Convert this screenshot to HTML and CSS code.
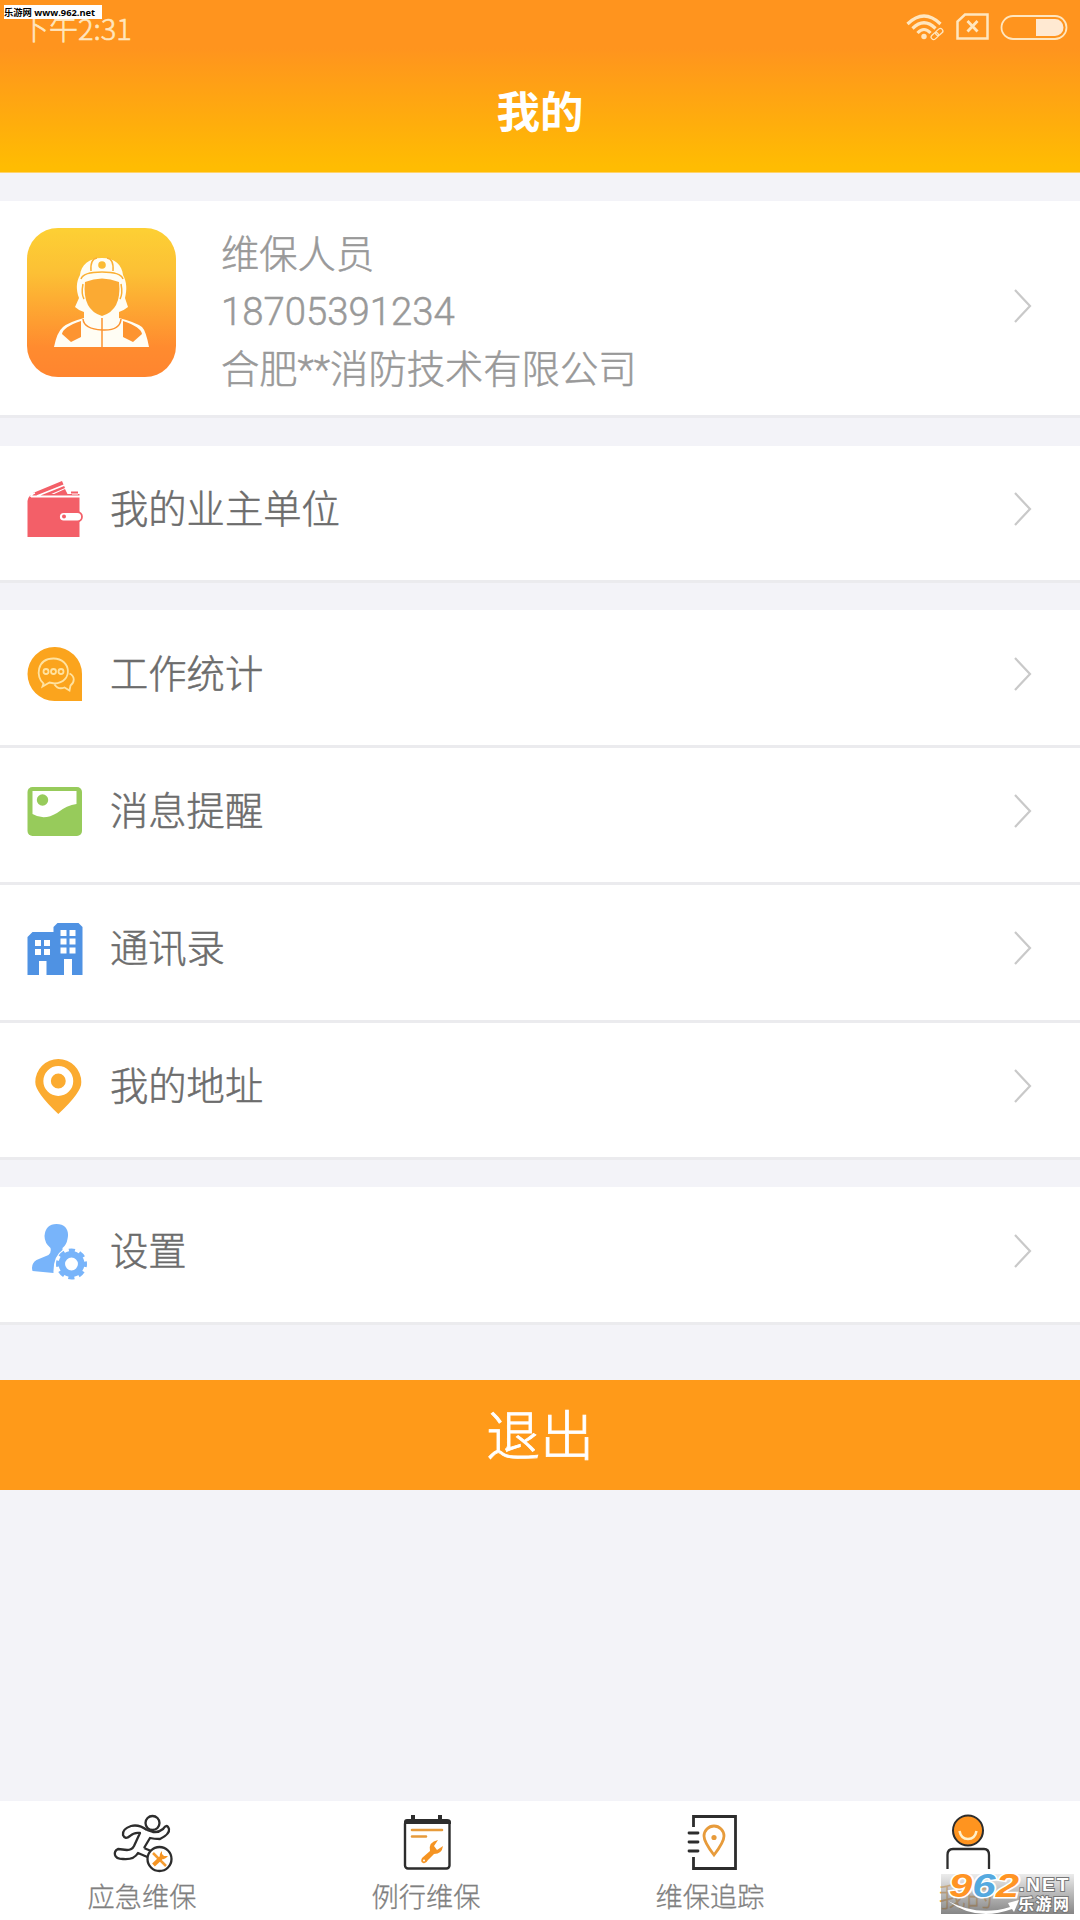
FILE: index.html
```html
<!DOCTYPE html>
<html lang="zh-CN">
<head>
<meta charset="utf-8">
<title>我的</title>
<link rel="stylesheet" href="styles.css">
</head>
<body>
<div class="screen">
  <header class="header">
    <div class="status">
      <span class="time">下午2:31</span>
      <svg class="status-icons" width="162" height="28" viewBox="0 0 162 28" fill="none" stroke="#ffe6bf">
        <path d="M1.500 11Q18-5 34.500 11M6.500 15.500Q18 4 29.500 15.500M11.500 20Q18 13 24.500 20" stroke-width="3.200"/>
        <circle cx="18" cy="23.500" r="2.700" fill="#ffe6bf" stroke="none"/>
        <g stroke-width="1.300" transform="rotate(-42 31 21)"><rect x="24" y="18.500" width="8" height="5" rx="2.500"/><rect x="30" y="18.500" width="8" height="5" rx="2.500"/></g>
        <path d="M59 1.500H81.500V25.500H51.500V8.500Z" stroke-width="2.500"/>
        <path d="M61.500 8L71.500 18.500M71.500 8L61.500 18.500" stroke-width="2.800"/>
        <rect x="95.500" y="3" width="65" height="23" rx="11.500" stroke-width="1.800"/>
        <path d="M130 6H149A8.500 8.500 0 0 1 149 23H130Z" fill="#ffe9d2" stroke="none"/>
      </svg>
    </div>
    <h1 class="title">我的</h1>
    <div class="site-tag">乐游网 www.962.net</div>
  </header>

  <main class="content">
    <section class="group profile">
      <svg class="avatar" width="149" height="149" viewBox="0 0 149 149">
        <defs><linearGradient id="av" x1="0" y1="0" x2="0" y2="1"><stop offset="0" stop-color="#fdd034"/><stop offset=".3" stop-color="#fcc035"/><stop offset=".8" stop-color="#ff8b2f"/><stop offset="1" stop-color="#ff852f"/></linearGradient></defs>
        <rect width="149" height="149" rx="31" fill="url(#av)"/>
        <path d="M53 47C54 37 62 30 75 30S95 37 96 47C100 54 100 62 98 70L101 79Q96 83 92 84V90Q108 94 115 99Q119 103 122 119H27Q30 104 36 99Q42 94 57 90V84Q51 82 48 79L52 70C49 62 49 54 53 47Z" fill="#fffdf4"/>
        <path d="M58 54Q75 47 92 54Q95 82 75 88Q55 82 58 54Z" fill="#fbaa33"/>
        <path d="M54 51Q56 44 75 44T96 51M64 43Q63 31 70 30M86 43Q87 31 80 30M56 56Q54 66 57 71M94 56Q96 66 93 71" fill="none" stroke="#fbb034" stroke-width="1.500"/>
        <circle cx="75" cy="37" r="3.800" fill="#fbbb34"/>
        <path d="M56 91Q57 101 75 102T94 91M75 90V119" fill="none" stroke="#fc9431" stroke-width="1.500"/>
        <path d="M35 106Q36 99 54 93V109L44 114ZM115 106Q114 99 96 93V109L106 114Z" fill="#fd9430"/>
      </svg>
      <div class="person"><p>维保人员</p><p class="phone">18705391234</p><p>合肥**消防技术有限公司</p></div>
      <svg class="chevron" width="18" height="34" viewBox="0 0 18 34"><path d="M1 1L16 17L1 33"/></svg>
    </section>

    <section class="group">
      <div class="row">
        <svg class="icon" width="60" height="60" viewBox="0 0 60 60">
          <path d="M3.500 58V22Q4.500 15 11.500 15H55.500V58Z" fill="#f35f68"/>
          <path d="M9 16V14L38 2L41 9L25 16ZM28 16L41 10L44 16Z" fill="#f35f68"/>
          <path d="M7 18Q7 15 11 14M13 17L43 5M48 14.500H54M7 17.500H56" stroke="#fff" stroke-width="1.800" fill="none"/>
          <path d="M47 13.500H54" stroke="#f35f68" stroke-width="2"/>
          <rect x="35" y="33" width="23" height="9.500" rx="4.700" fill="#fff" stroke="#f35f68" stroke-width="1.800"/><circle cx="40" cy="37.500" r="2" fill="#f35f68"/>
        </svg>
        <span class="label">我的业主单位</span>
        <svg class="chevron" width="18" height="34" viewBox="0 0 18 34"><path d="M1 1L16 17L1 33"/></svg>
      </div>
    </section>

    <section class="group">
      <div class="row">
        <svg class="icon" width="60" height="60" viewBox="0 0 60 60">
          <path d="M30.500 3A27 27 0 1 0 30.500 57H58V30A27 27 0 0 0 30.500 3Z" fill="#fba41d"/>
          <g fill="none" stroke="#ffe2a0" stroke-width="1.800" transform="translate(1.500 .5)"><path d="M18 39C10 33 11 14 28 14C46 14 48 38 29 39L24 38L17 42Z"/><path d="M44 29C50 32 49 38 45 41L44 46L39 43C34 45 31 43 29 40"/><circle cx="20.500" cy="27" r="2.500"/><circle cx="28" cy="27" r="2.500"/><circle cx="35.500" cy="27" r="2.500"/></g>
        </svg>
        <span class="label">工作统计</span>
        <svg class="chevron" width="18" height="34" viewBox="0 0 18 34"><path d="M1 1L16 17L1 33"/></svg>
      </div>
      <div class="row">
        <svg class="icon" width="60" height="60" viewBox="0 0 60 60">
          <rect x="3.500" y="6" width="54.500" height="49" rx="5" fill="#97cb5b"/>
          <path d="M8.500 10H52.500V23Q43 24 33 32Q20 40 8.500 33Z" fill="#fff"/><circle cx="18.500" cy="19" r="5.700" fill="#97cb5b"/>
        </svg>
        <span class="label">消息提醒</span>
        <svg class="chevron" width="18" height="34" viewBox="0 0 18 34"><path d="M1 1L16 17L1 33"/></svg>
      </div>
      <div class="row">
        <svg class="icon" width="60" height="60" viewBox="0 0 60 60">
          <path d="M3.500 57V19L8.500 14H29.500V9L33.500 5H54.500L58.500 9V57H48V41H40V57H22.500V43H15V57Z" fill="#4f92e3"/>
          <path d="M11 22h6v6h-6zM20 22h6v6h-6zM11 31h6v6h-6zM20 31h6v6h-6zM36.500 12h6v6h-6zM45.500 12h6v6h-6zM36.500 20.500h6v6h-6zM45.500 20.500h6v6h-6zM36.500 29.500h6v6h-6zM45.500 29.500h6v6h-6z" fill="#fff"/>
        </svg>
        <span class="label">通讯录</span>
        <svg class="chevron" width="18" height="34" viewBox="0 0 18 34"><path d="M1 1L16 17L1 33"/></svg>
      </div>
      <div class="row">
        <svg class="icon" width="60" height="60" viewBox="0 0 60 60">
          <path d="M34.300 58Q11 36 11.300 26A23 23 0 0 1 57.300 26Q58 36 34.300 58Z" fill="#fbab30"/>
          <circle cx="34.300" cy="25" r="11.200" fill="#fbab30" stroke="#fff" stroke-width="7.500"/>
        </svg>
        <span class="label">我的地址</span>
        <svg class="chevron" width="18" height="34" viewBox="0 0 18 34"><path d="M1 1L16 17L1 33"/></svg>
      </div>
    </section>

    <section class="group">
      <div class="row">
        <svg class="icon" width="60" height="60" viewBox="0 0 60 60" overflow="visible">
          <path d="M32.500 3C42 3 45.500 10 43.500 18Q42.500 24 38.500 27V29Q29 35 29.500 52L8.500 50Q6.500 43 12.500 39L24.500 34Q27.500 32 26.500 27Q20.500 22 20.500 15Q21.500 3 32.500 3Z" fill="#78b4fa"/>
          <circle cx="47.500" cy="43" r="9.700" fill="none" stroke="#78b4fa" stroke-width="6.500"/>
          <circle cx="47.500" cy="43" r="13.500" fill="none" stroke="#78b4fa" stroke-width="4" stroke-dasharray="6 4.603" stroke-dashoffset="3"/>
        </svg>
        <span class="label">设置</span>
        <svg class="chevron" width="18" height="34" viewBox="0 0 18 34"><path d="M1 1L16 17L1 33"/></svg>
      </div>
    </section>

    <button class="logout">退出</button>
  </main>

  <nav class="tabs">
    <div class="tab">
      <svg width="64" height="64" viewBox="0 0 64 64" fill="none" stroke="#2d2d2d" stroke-width="2.300" stroke-linejoin="round">
        <circle cx="42.500" cy="13" r="7"/>
        <path d="M37 20Q29 14 21 16Q12 19 13 25Q15 30 20 26Q24 22 30 23L24 36Q22 40 17 40L8 39Q4 41 5 45Q6 49 13 49Q24 50 28 43L42 49M34 38L40 28Q44 29 50 29Q60 24 59 19Q57 13 53 19Q48 23 43 22L37 20M34 38L41 41"/>
        <circle cx="49.500" cy="49" r="12" fill="#fff"/>
        <path d="M43 43L56 56" stroke="#f59c31" stroke-width="2.500"/><path d="M43.500 55L53 46" stroke="#f59423" stroke-width="4"/><path d="M52 41Q48 45 51 48T58 46L54 46L52 44Z" fill="#f59423" stroke="none"/>
      </svg><span>应急维保</span>
    </div>
    <div class="tab">
      <svg class="shift-s" width="64" height="64" viewBox="0 0 64 64">
        <path d="M18 5V12M45 5V12" stroke="#2d2d2d" stroke-width="4"/><rect x="10" y="11" width="44.500" height="47.500" rx="3" fill="#fff" stroke="#2d2d2d" stroke-width="2.400"/><path d="M9 14V12Q9 9 12 9H52Q56 9 56 12V14Z" fill="#2d2d2d"/>
        <path d="M17 20H47M17 26.500H31" stroke="#e79b3b" stroke-width="2.600" stroke-linecap="round"/>
        <path d="M43 30Q33 32 35 41L27 48Q25 52 28 53Q31 54 33 50L39 44Q47 44 48 36L42 40L39 36Z" fill="#f59423"/><circle cx="29" cy="50.500" r="1" fill="#fff"/>
      </svg><span>例行维保</span>
    </div>
    <div class="tab">
      <svg class="shift-l" width="64" height="64" viewBox="0 0 64 64" fill="none" stroke="#2d2d2d" stroke-width="2.800">
        <path d="M11.500 17V6.500H53.500V58.500H11.500V47"/><path d="M7 23H16M7 32H16M7 41H16" stroke-linecap="round"/>
        <path d="M32 45Q22 32 22 26A10 10 0 0 1 42 26Q42 32 32 45Z" stroke="#e79b3b"/><circle cx="32" cy="27.500" r="2.600" fill="#e79b3b" stroke="none"/>
      </svg><span>维保追踪</span>
    </div>
    <div class="tab active">
      <svg class="shift-m" width="64" height="64" viewBox="0 0 64 64" fill="none" stroke="#2d2d2d" stroke-width="2">
        <circle cx="32" cy="20.500" r="15" fill="#ff941f"/><path d="M23.500 21Q25 29 32 29T40.500 21" stroke="#fff0cb" stroke-width="2.500"/><path d="M11.500 59V45Q11.500 39 17 39H48Q53 39 53 45V59" stroke-width="2.300"/>
      </svg><span>我的</span>
    </div>
    <div class="watermark">
      <svg class="wm-swoosh" width="80" height="16" viewBox="0 0 80 16"><path d="M4 1Q34 17 66 7L64 3L75 0L70 12L68 9Q32 22 4 1Z" fill="#fff"/></svg>
      <div class="wm-num"><i>9</i><i class="blue">6</i><i>2</i></div>
      <div class="wm-net">.NET</div><div class="wm-name">乐游网</div>
    </div>
  </nav>
</div>
</body>
</html>
```

FILE: styles.css
```css
* { box-sizing: border-box; }
body { margin: 0; font-family: "Roboto", "Noto Sans CJK SC", sans-serif; }
p, h1 { margin: 0; }
.screen { width: 1080px; height: 1920px; display: flex; flex-direction: column; background: #f3f3f8; overflow: hidden; }
.header { position: relative; height: 173px; background: linear-gradient(#ff941e 0, #ff941e 28%, #ffbc02 97%); border-bottom: 1px solid #ffd36a; }
.status { height: 54px; display: flex; justify-content: space-between; padding: 0 12px 0 20px; }
.time { font: 300 29px/54px "Noto Sans CJK SC", sans-serif; color: #ffe6bf; -webkit-text-stroke: .6px #ffe6bf; }
.status-icons { margin-top: 13px; }
.title { text-align: center; font: 700 43.500px/112px "Noto Sans CJK SC", sans-serif; color: #fff; height: 112px; }
.site-tag { position: absolute; left: 4px; top: 5px; width: 98px; height: 14px; background: #fff; color: #000; font: 700 9.300px/15px "Open Sans", "Noto Sans CJK SC", sans-serif; white-space: nowrap; }

.content { flex: 1; padding-top: 28px; display: flex; flex-direction: column; gap: 27.500px; }
.group { background: #fff; }
.profile { display: flex; align-items: center; height: 217px; padding: 0 48px 0 27px; border-bottom: 3px solid #ebebef; }
.avatar { margin-top: -12px; }
.person { flex: 1; padding: 8px 0 0 45px; font-weight: 300; font-size: 38.300px; line-height: 57.500px; color: #999; -webkit-text-stroke: .5px #999; }
.profile .chevron { margin-top: -5px; }
.row { display: flex; align-items: center; height: 137.400px; padding: 0 48px 8px 24px; border-bottom: 3px solid #ebebee; }
.label { flex: 1; padding: 2px 0 0 26px; font-size: 38.300px; font-weight: 300; color: #6c6c6c; line-height: 60px; -webkit-text-stroke: .5px #6c6c6c; }
.chevron { fill: none; stroke: #c9c9c9; stroke-width: 2.200; }
.logout { margin-top: 28px; border: 0; height: 110px; background: #ff9a19; color: #fff; font: 300 54px/104px "Noto Sans CJK SC", sans-serif; padding: 0 0 5px; -webkit-text-stroke: .8px #fff; }

.tabs { position: relative; height: 119px; background: #fff; display: grid; grid-template-columns: 284px 284px 284px 228px; }
.tab { display: flex; flex-direction: column; align-items: center; padding-top: 9px; font: 300 27.200px/42px "Noto Sans CJK SC", sans-serif; color: #808080; -webkit-text-stroke: .3px currentColor; }
.tab svg { display: block; }
.shift-s { margin-left: 2px; }
.shift-m { margin-left: 4px; }
.shift-l { margin-left: 8px; }
.active { color: #e99b39; }
.watermark { position: absolute; left: 941px; top: 73px; width: 133px; height: 40px; background: linear-gradient(rgba(220,220,220,.55), rgba(100,100,100,.78)); }
.wm-num { position: absolute; left: 8px; top: -4px; font: italic 700 33px/32px "Liberation Sans", sans-serif; color: #ff9424; display: flex; transform: scaleX(1.270); transform-origin: left; -webkit-text-stroke: 3px #fff; paint-order: stroke fill; }
.wm-num .blue { color: #55a9df; }
.wm-net { position: absolute; left: 78px; top: 1px; font: 700 19px/20px "Liberation Sans", sans-serif; color: #fff; letter-spacing: 2px; -webkit-text-stroke: 2px #777; paint-order: stroke fill; }
.wm-name { position: absolute; left: 77px; top: 19px; font: 700 16px/20px "Noto Sans CJK SC", sans-serif; color: #fff; letter-spacing: 1.500px; -webkit-text-stroke: 2px #777; paint-order: stroke fill; }
.wm-swoosh { position: absolute; left: 3px; top: 26px; }
```
